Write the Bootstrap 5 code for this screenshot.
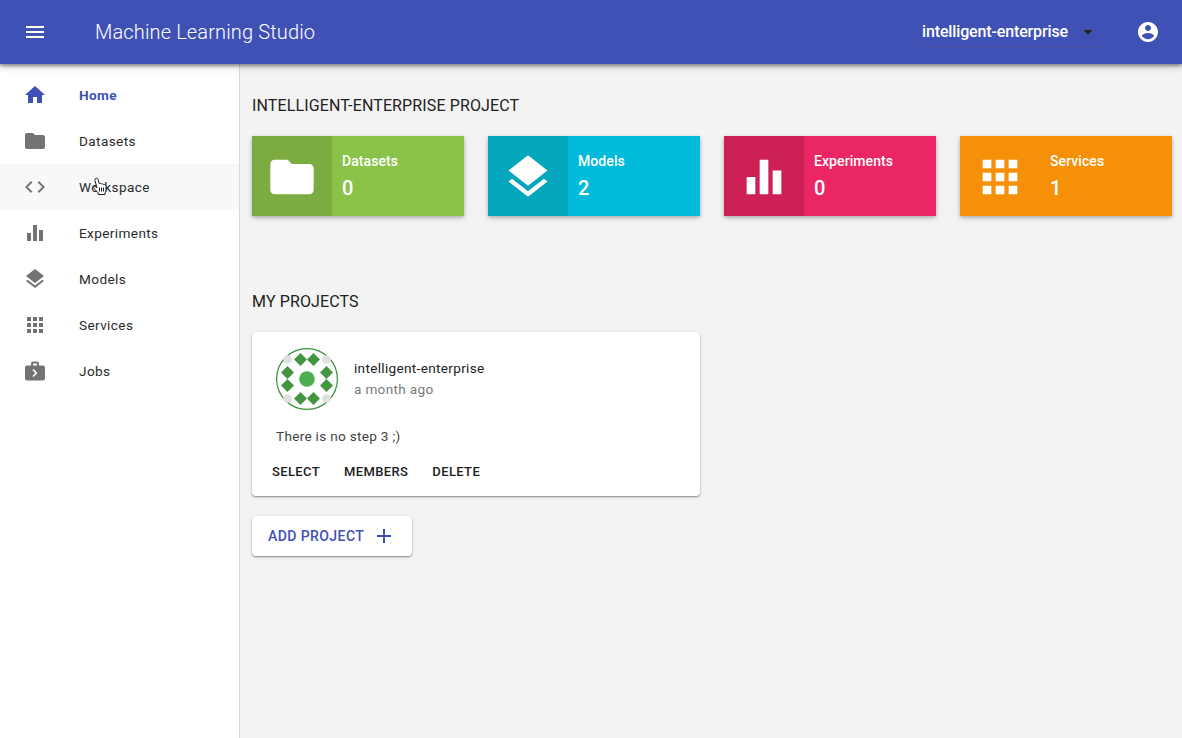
<!DOCTYPE html>
<html lang="en">
<head>
<meta charset="utf-8">
<meta name="viewport" content="width=device-width, initial-scale=1">
<title>Machine Learning Studio</title>
<link href="https://cdn.jsdelivr.net/npm/bootstrap@5.3.0/dist/css/bootstrap.min.css" rel="stylesheet">
<style>
  body { font-family: Roboto, "Liberation Sans", sans-serif; font-size: 14px; line-height: 20px; letter-spacing: .14px; color: #212121; background: #f3f3f3; overflow: hidden; }
  svg { display: block; fill: currentColor; flex: none; }
  .topbar { height: 64px; background: #3f51b5; color: #fff; padding: 0 22px 0 23px; box-shadow: 0 1px 8px rgba(0,0,0,.35), 0 2px 3px rgba(0,0,0,.3); z-index: 2; }
  .app-title { font-size: 20px; font-weight: 300; margin-left: 48px; letter-spacing: .14px; }
  .project-select { width: 178px; height: 32px; margin-right: 36px; font-size: 16px; font-weight: 500; letter-spacing: -.14px; border-bottom: 1px solid #4a4f97; }
  .sidebar { width: 240px; background: #fff; border-right: 1px solid #d9d9d9; padding-top: 8px; }
  .side-link { height: 46px; padding: 0 0 0 23px; gap: 32px; color: #2b2b2b; font-size: 13.6px; letter-spacing: .38px; border-radius: 0; }
  .side-link svg { color: #737373; }
  .side-link.hovered { background: #f8f8f8; }
  .side-link.current, .side-link.current svg { color: #3f51b5; font-weight: 700; }
  .pointer { left: 92px; top: 13px; }
  .main-area { padding: 32px 10px 0 12px; }
  .section-title { font-size: 16px; font-weight: 400; line-height: 20px; letter-spacing: .13px; margin: 0; }
  .tiles { gap: 24px; margin: 20px 0 76px; }
  .tile { width: 212px; height: 80px; color: #fff; box-shadow: 0 2px 5px rgba(0,0,0,.22), 0 1px 2px rgba(0,0,0,.12); }
  .tile-icon { width: 80px; padding-top: 1px; }
  .tile-text { padding: 15px 10px 0; font-weight: 500; letter-spacing: .08px; }
  .tile-count { font-size: 20px; line-height: 24px; margin-top: 5px; }
  .green { background: #8bc34a; } .green .tile-icon { background: #7cac41; }
  .cyan { background: #00bcda; } .cyan .tile-icon { background: #03a6bc; }
  .pink { background: #ea2664; } .pink .tile-icon { background: #cd2156; }
  .orange { background: #f79009; }
  .raised { background: #fff; border: 0; border-radius: 4px; box-shadow: 0 1px 3px rgba(0,0,0,.28), 0 1px 1px rgba(0,0,0,.22); }
  .project { width: 448px; height: 164px; margin-top: 20px; padding: 16px 20px 0 24px; }
  .project-meta { font-size: 13.6px; letter-spacing: .31px; line-height: 21px; }
  .muted { color: #7a7a7a; }
  .project-note { color: #424242; font-size: 13.6px; letter-spacing: .29px; margin-top: 16px; }
  .flat-btn { border: 0; background: none; padding: 0; font-size: 13px; font-weight: 500; line-height: 20px; letter-spacing: .37px; color: #212121; }
  .actions { margin-left: -4px; }
  .add-btn { width: 160px; height: 40px; margin-top: 20px; padding: 0 16px; color: #3f51b5; font-size: 14px; font-weight: 500; letter-spacing: .42px; }
</style>
</head>
<body class="vh-100 d-flex flex-column">
<svg class="d-none">
  <symbol id="i-folder" viewBox="0 0 24 24"><path d="M10 4H4c-1.100 0-1.990.9-1.990 2L2 18c0 1.100.9 2 2 2h16c1.100 0 2-.9 2-2V8c0-1.100-.9-2-2-2h-8l-2-2z"/></symbol>
  <symbol id="i-chart" viewBox="0 0 24 24"><path d="M10 20h4V4h-4v16zm-6 0h4v-8H4v8zM16 9v11h4V9h-4z"/></symbol>
  <symbol id="i-layers" viewBox="0 0 24 24"><path d="M11.990 18.540l-7.370-5.730L3 14.070l9 7 9-7-1.630-1.270-7.380 5.740zM12 16l7.360-5.730L21 9l-9-7-9 7 1.630 1.270L12 16z"/></symbol>
  <symbol id="i-apps" viewBox="0 0 24 24"><path d="M4 8h4V4H4v4zm6 12h4v-4h-4v4zm-6 0h4v-4H4v4zm0-6h4v-4H4v4zm6 0h4v-4h-4v4zm6-10v4h4V4h-4zm-6 4h4V4h-4v4zm6 6h4v-4h-4v4zm0 6h4v-4h-4v4z"/></symbol>
</svg>

<header class="topbar navbar flex-nowrap position-relative flex-shrink-0">
  <svg width="24" height="24" viewBox="0 0 24 24"><path d="M3 18h18v-2H3v2zm0-5h18v-2H3v2zm0-7v2h18V6H3z"/></svg>
  <div class="app-title me-auto">Machine Learning Studio</div>
  <div class="project-select d-flex align-items-center justify-content-between">
    <span>intelligent-enterprise</span>
    <svg width="24" height="10" viewBox="0 0 24 10"><path d="M7.500 3h9L12 7.500z" style="fill:#212121"/></svg>
  </div>
  <svg width="24" height="24" viewBox="0 0 24 24"><path d="M12 2C6.480 2 2 6.480 2 12s4.480 10 10 10 10-4.480 10-10S17.520 2 12 2zm0 3c1.660 0 3 1.340 3 3s-1.340 3-3 3-3-1.340-3-3 1.340-3 3-3zm0 14.200c-2.500 0-4.710-1.280-6-3.220.030-1.990 4-3.080 6-3.080 1.990 0 5.970 1.090 6 3.080-1.290 1.940-3.500 3.220-6 3.220z"/></svg>
</header>

<div class="d-flex flex-grow-1">
  <nav class="sidebar nav flex-column flex-nowrap flex-shrink-0">
    <a class="side-link nav-link current d-flex align-items-center"><svg width="24" height="24" viewBox="0 0 24 24"><path d="M10 20v-6h4v6h5v-8h3L12 3 2 12h3v8z"/></svg>Home</a>
    <a class="side-link nav-link d-flex align-items-center"><svg width="24" height="24"><use href="#i-folder"/></svg>Datasets</a>
    <a class="side-link nav-link hovered d-flex align-items-center position-relative"><svg width="24" height="24" viewBox="0 0 24 24"><path d="M9.400 16.600L4.800 12l4.600-4.600L8 6l-6 6 6 6 1.400-1.400zm5.200 0l4.600-4.600-4.600-4.600L16 6l6 6-6 6-1.400-1.400z"/></svg>Workspace
      <svg class="pointer position-absolute" width="16" height="19" viewBox="0 0 16 19"><path d="M3.500 1.500C4.500.8 5.500 1.200 5.900 2.300L7.200 6.500C8 6 9 6.300 9.300 7 10.200 6.500 11.200 6.900 11.500 7.600 12.800 7.200 14 8 14 9.500V12.500C14 14 13.500 15 13 16V17.500H6.300V16L2.200 11.600C1.300 10.500 2.200 9 3.500 9.700L4.900 10.700 3 3.500C2.800 2.600 3 1.900 3.500 1.500Z" style="fill:#fff;stroke:#1c1c1c;stroke-width:1"/><path d="M7.500 10.500v4M9.500 10.500v4M11.500 10.500v4" style="stroke:#1c1c1c;stroke-width:1"/></svg>
    </a>
    <a class="side-link nav-link d-flex align-items-center"><svg width="24" height="24"><use href="#i-chart"/></svg>Experiments</a>
    <a class="side-link nav-link d-flex align-items-center"><svg width="24" height="24"><use href="#i-layers"/></svg>Models</a>
    <a class="side-link nav-link d-flex align-items-center"><svg width="24" height="24"><use href="#i-apps"/></svg>Services</a>
    <a class="side-link nav-link d-flex align-items-center"><svg width="24" height="24" viewBox="0 0 24 24"><path fill-rule="evenodd" transform="translate(0 .6)" d="M10 2h4a2 2 0 0 1 2 2v2h4a2 2 0 0 1 2 2v11a2 2 0 0 1-2 2H4a2 2 0 0 1-2-2V8a2 2 0 0 1 2-2h4V4a2 2 0 0 1 2-2zM14 6V4h-4v2h4zM10.500 17.500L14.500 13.500 10.500 9.500 9.400 10.600 12.300 13.500 9.400 16.400z"/></svg>Jobs</a>
  </nav>

  <main class="main-area flex-grow-1">
    <h2 class="section-title">INTELLIGENT-ENTERPRISE PROJECT</h2>
    <div class="tiles d-flex">
      <div class="tile green d-flex"><div class="tile-icon d-flex align-items-center justify-content-center"><svg width="52" height="52"><use href="#i-folder"/></svg></div><div class="tile-text">Datasets<div class="tile-count">0</div></div></div>
      <div class="tile cyan d-flex"><div class="tile-icon d-flex align-items-center justify-content-center"><svg width="52" height="52"><use href="#i-layers"/></svg></div><div class="tile-text">Models<div class="tile-count">2</div></div></div>
      <div class="tile pink d-flex"><div class="tile-icon d-flex align-items-center justify-content-center"><svg width="52" height="52"><use href="#i-chart"/></svg></div><div class="tile-text">Experiments<div class="tile-count">0</div></div></div>
      <div class="tile orange d-flex"><div class="tile-icon d-flex align-items-center justify-content-center"><svg width="52" height="52"><use href="#i-apps"/></svg></div><div class="tile-text">Services<div class="tile-count">1</div></div></div>
    </div>

    <h2 class="section-title">MY PROJECTS</h2>
    <section class="project raised">
      <div class="d-flex align-items-center gap-3">
        <svg width="62" height="62" viewBox="0 0 62 62">
          <circle cx="31" cy="31" r="30.400" style="fill:#fff;stroke:#388e3c;stroke-width:1.200"/>
          <g style="fill:#e0e0e0"><circle cx="11.500" cy="11.500" r="4.300"/><circle cx="50.500" cy="11.500" r="4.300"/><circle cx="11.500" cy="50.500" r="4.300"/><circle cx="50.500" cy="50.500" r="4.300"/></g>
          <path style="fill:#43963f" d="M24.500 5l6.500 6.500-6.500 6.500-6.500-6.500zM37.500 5l6.500 6.500-6.500 6.500-6.500-6.500zM24.500 44l6.500 6.500-6.500 6.500-6.500-6.500zM37.500 44l6.500 6.500-6.500 6.500-6.500-6.500zM11.500 18l6.500 6.500-6.500 6.500-6.500-6.500zM11.500 31l6.500 6.500-6.500 6.500-6.500-6.500zM50.500 18l6.500 6.500-6.500 6.500-6.500-6.500zM50.500 31l6.500 6.500-6.500 6.500-6.500-6.500z"/>
          <circle cx="31" cy="31" r="7.800" style="fill:#4caf50"/>
        </svg>
        <div class="project-meta"><div>intelligent-enterprise</div><div class="muted">a month ago</div></div>
      </div>
      <p class="project-note mb-0">There is no step 3 ;)</p>
      <div class="d-flex gap-4 mt-3 actions">
        <button class="flat-btn">SELECT</button><button class="flat-btn">MEMBERS</button><button class="flat-btn">DELETE</button>
      </div>
    </section>
    <button class="add-btn raised d-flex align-items-center justify-content-between text-nowrap">ADD PROJECT<svg width="24" height="24" viewBox="0 0 24 24"><path d="M19 13h-6v6h-2v-6H5v-2h6V5h2v6h6v2z"/></svg></button>
  </main>
</div>
<script src="https://cdn.jsdelivr.net/npm/bootstrap@5.3.0/dist/js/bootstrap.bundle.min.js"></script>
</body>
</html>
